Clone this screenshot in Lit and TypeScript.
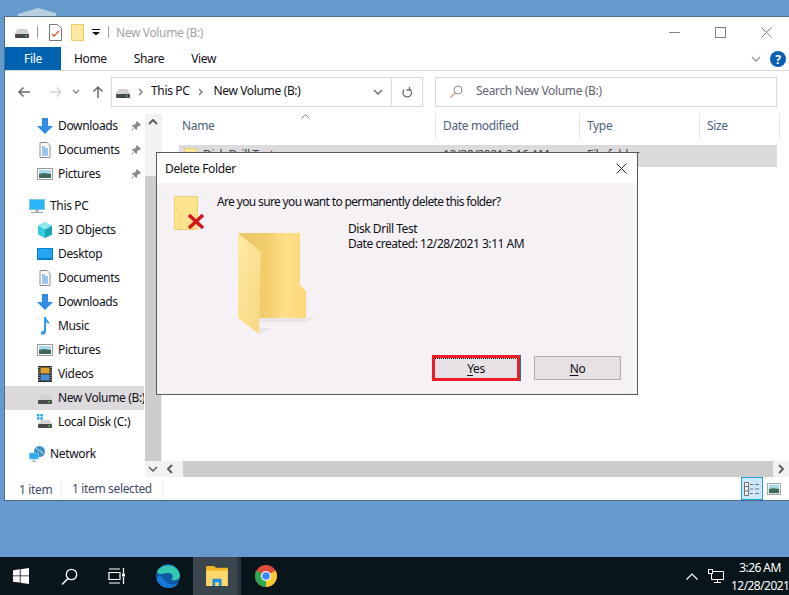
import { css, html, LitElement } from 'lit';
import { customElement } from 'lit/decorators.js';

const drive = () => html`<svg width="16" height="16" viewBox="0 0 16 16"><path d="M3.500 5h9l2.500 4v1H1V9z" fill="#d2d2d2"/><rect x="1" y="10" width="14" height="4" rx="1" fill="#4a4a4a"/><rect x="11" y="11.500" width="2" height="1" fill="#5fe05f"/></svg>`;
const docIcon = () => html`<svg width="16" height="16" viewBox="0 0 16 16"><path d="M3 .5h7l3 3v12H3z" fill="#fff" stroke="#8d8d8d"/><path d="M5 5h3M5 7h6M5 9h6M5 11h6M5 13h6" stroke="#2f8fe0"/></svg>`;
const downIcon = () => html`<svg width="16" height="16" viewBox="0 0 16 16"><path d="M5 0h6v8h5l-8 8-8-8h5z" fill="#2f8fe6"/></svg>`;
const picIcon = () => html`<svg width="16" height="16" viewBox="0 0 16 16"><rect x="0.5" y="2.500" width="15" height="11" fill="#fff" stroke="#9a9a9a"/><rect x="2" y="4" width="12" height="4" fill="#a9d6ea"/><path d="M2 8l5-1 7 1v4H2z" fill="#3e6a5e"/></svg>`;
const pin = () => html`<svg class="pin" width="10" height="10" viewBox="0 0 10 10"><path d="M6 0l4 4-1 1-1-.3-2 2 .2 1.600-1 .7L3.400 7 1 9.500.5 9 3 6.600.9 4.800 1.600 3.800l1.600.2 2-2L5 1z" fill="#8b8b8b"/></svg>`;
const pcIcon = () => html`<svg width="16" height="16" viewBox="0 0 16 16"><rect x="0.5" y="1.500" width="15" height="10" fill="#29b6f6" stroke="#7cc7e8"/><path d="M6 12h4v1.500H6zM2 14h12v1H2z" fill="#9aa4ab"/></svg>`;
const cubeIcon = () => html`<svg width="16" height="16" viewBox="0 0 16 16"><path d="M8 0l7 3.500v9L8 16l-7-3.500v-9z" fill="#35cbdc"/><path d="M8 7.500V16l7-3.500v-9z" fill="#1aa4b8"/><path d="M1 3.500L8 0l7 3.500-7 4z" fill="#8fe8f0"/></svg>`;
const deskIcon = () => html`<svg width="16" height="16" viewBox="0 0 16 16"><rect x="0" y="2" width="16" height="12" fill="#0b7fd6"/><rect x="1" y="3" width="14" height="9" fill="#25a7f0"/></svg>`;
const noteIcon = () => html`<svg width="16" height="18" viewBox="0 0 16 18"><path d="M7 0h2c.3 2.500 2 3.500 3.500 6-1 2-2-.5-3.500-1v9.500C9 17 6.500 18.300 4.500 17.500 3 16.500 4 14 7 13.500z" fill="#2f9cf0"/></svg>`;
const videoIcon = () => html`<svg width="16" height="16" viewBox="0 0 16 16"><rect x="1" y="0" width="14" height="16" fill="#2b2b2b"/><rect x="3.500" y="1.500" width="9" height="6" fill="#e0a030"/><rect x="3.500" y="8.500" width="9" height="6" fill="#4a90d0"/><path d="M2 1v14M14 1v14" stroke="#fff" stroke-dasharray="1 1.500"/></svg>`;
const localIcon = () => html`<svg width="16" height="16" viewBox="0 0 16 16"><path d="M0 0h2.500v2.500H0zM3.300 0h2.500v2.500H3.300zM0 3.300h2.500v2.500H0zM3.300 3.300h2.500v2.500H3.300z" fill="#25a7f0"/><path d="M4 6h8.500l2.500 3.500v.5H1v-.5z" fill="#d2d2d2"/><rect x="1" y="10" width="14" height="4" rx="1" fill="#4a4a4a"/><rect x="11" y="11.500" width="2" height="1" fill="#5fe05f"/></svg>`;
const netIcon = () => html`<svg width="16" height="16" viewBox="0 0 16 16"><circle cx="10.500" cy="5.500" r="5.500" fill="#3f8fc4"/><path d="M7 2c2 1 2 3 5 3l2 3" stroke="#bfe3f5" fill="none"/><rect x="0.500" y="7" width="9" height="6" fill="#2da8ee" stroke="#90c8e8" stroke-width="0.700"/><path d="M3.500 13.500h3v1h-3zM2.500 15h5v.7h-5z" fill="#9aa4ab"/></svg>`;
const folderSmall = () => html`<svg width="13" height="17" viewBox="0 0 13 17"><path d="M.5.500h12v16H.5z" fill="#ffe9a0" stroke="#eccb6a"/></svg>`;
const chevR = () => html`<svg width="6" height="8" viewBox="0 0 6 8"><path d="M1 1l3 3-3 3" fill="none" stroke="#808080" stroke-width="1.500"/></svg>`;
const chevD = (c = '#707070') => html`<svg width="10" height="6" viewBox="0 0 10 6"><path d="M1 1l4 4 4-4" fill="none" stroke="${c}" stroke-width="1.500"/></svg>`;

const NAV_TOP = [
  { icon: downIcon, label: 'Downloads' },
  { icon: docIcon, label: 'Documents' },
  { icon: picIcon, label: 'Pictures' },
];
const NAV_PC = [
  { icon: cubeIcon, label: '3D Objects' },
  { icon: deskIcon, label: 'Desktop' },
  { icon: docIcon, label: 'Documents' },
  { icon: downIcon, label: 'Downloads' },
  { icon: noteIcon, label: 'Music' },
  { icon: picIcon, label: 'Pictures' },
  { icon: videoIcon, label: 'Videos' },
  { icon: drive, label: 'New Volume (B:)', selected: true },
  { icon: localIcon, label: 'Local Disk (C:)' },
];

@customElement('app-root')
export class AppRoot extends LitElement {
  static override styles = css`
    :host {
      display: block;
      width: 789px;
      height: 595px;
      position: relative;
      overflow: hidden;
      background: #6699cc;
      font: 12px 'Noto Sans', sans-serif;
      letter-spacing: -0.35px;
      color: #101018;
    }
    svg { display: block; flex: none; }
    .page { display: flex; flex-direction: column; height: 595px; }
    .desk { flex: 1; padding: 16px 0 0 4px; position: relative; }
    .bin { position: absolute; left: 18px; top: 8px; }
    .window {
      height: 485px;
      box-sizing: border-box;
      background: #fff;
      border: 1px solid #4d6f8f;
      border-right: 0;
      display: flex;
      flex-direction: column;
    }
    .titlebar { height: 30px; display: flex; align-items: center; padding-left: 9px; flex: none; }
    .tsep { width: 1px; height: 12px; background: #9a9a9a; }
    .wtitle { color: #a3a3a3; margin-left: 7px; flex: 1; }
    .wbtns { display: flex; align-items: center; gap: 35px; padding-right: 17px; }
    .tabs { height: 23px; display: flex; align-items: stretch; border-bottom: 1px solid #dadada; flex: none; }
    .tab-file { width: 56px; background: #0063b1; color: #fff; display: flex; align-items: center; justify-content: center; }
    .tab { display: flex; align-items: center; }
    .tab-right { margin-left: auto; display: flex; align-items: center; gap: 9px; padding-right: 3px; background: #fefefe; }
    .qtext { font: 700 12px 'Noto Sans', sans-serif; fill: #fff; letter-spacing: 0; }
    .navbar { height: 42px; flex: none; display: flex; align-items: center; padding-bottom: 1px; box-sizing: border-box; }
    .nav-btns { width: 106px; display: flex; align-items: center; padding-left: 12px; box-sizing: border-box; }
    .addr { width: 312px; height: 30px; box-sizing: border-box; border: 1px solid #d9d9d9; display: flex; align-items: center; }
    .addr-path { width: 280px; flex: none; display: flex; align-items: center; box-sizing: border-box; padding-left: 3px; height: 100%; border-right: 1px solid #d9d9d9; }
    .crumb { padding-bottom: 2px; }
    .refresh { flex: 1; display: flex; justify-content: center; }
    .search { width: 342px; height: 30px; margin-left: 12px; box-sizing: border-box; border: 1px solid #d9d9d9; display: flex; align-items: center; padding-left: 14px; gap: 13px; color: #5f6670; }
    .search span { padding-bottom: 2px; }
    .main { flex: 1; display: flex; min-height: 0; padding-top: 1px; }
    .navpane { width: 139px; margin-right: 1px; flex: none; overflow: hidden; }
    .nrow { height: 24px; display: flex; align-items: center; padding-left: 32px; gap: 5px; white-space: nowrap; position: relative; }
    .nrow span { padding-bottom: 2px; }
    .nrow.lvl0 { padding-left: 24px; }
    .nrow.sel { background: #dcdadd; }
    .nrow .pin { position: absolute; left: 126px; top: 7px; }
    .gap { height: 8px; }
    .vscroll { width: 16px; flex: none; background: #f4f1f5; display: flex; flex-direction: column; }
    .sb-btn { height: 16px; flex: none; display: flex; align-items: center; justify-content: center; }
    .vtrack { flex: 1; display: flex; flex-direction: column; padding-top: 46px; }
    .vthumb { flex: 1; background: #cdcdcd; }
    .pane { flex: 1; display: flex; flex-direction: column; border-left: 1px solid #f0f0f0; min-width: 0; }
    .list { flex: 1; min-height: 0; }
    .lhead { height: 31px; display: flex; color: #4c607a; position: relative; }
    .col { display: flex; align-items: center; padding: 0 0 2px 7px; box-sizing: border-box; height: 25px; border-right: 1px solid #e5e5e5; }
    .sort { position: absolute; left: 139px; top: 0; }
    .lrow { height: 22px; margin: 0 12px 0 17px; background: #dcdadd; display: flex; align-items: center; padding-left: 5px; white-space: nowrap; color: #444; }
    .lrow span { padding-bottom: 3px; }
    .lrow .c-name { width: 240px; margin-left: 6px; }
    .lrow .c-date { width: 144px; }
    .hscroll { height: 16px; flex: none; display: flex; background: #f4f1f5; }
    .hthumb { flex: 1; background: #cdcdcd; margin: 0 0 0 5px; }
    .sb-h { width: 16px; flex: none; display: flex; align-items: center; justify-content: center; }
    .status { height: 23px; flex: none; display: flex; align-items: center; color: #3f4a66; }
    .st1 { width: 57px; padding-left: 14px; box-sizing: border-box; border-right: 1px solid #eee; height: 16px; line-height: 16px; padding-top: 1px; }
    .st2 { padding-left: 10px; width: 90px; border-right: 1px solid #eee; height: 16px; line-height: 16px; padding-top: 1px; }
    .views { margin-left: auto; display: flex; align-items: center; padding-right: 8px; gap: 4px; }
    .vbtn { width: 22px; height: 23px; box-sizing: border-box; background: #cce8ff; border: 1px solid #26a0da; display: flex; align-items: center; justify-content: center; }
    .dialog {
      position: absolute;
      left: 156px;
      top: 152px;
      width: 482px;
      height: 243px;
      box-sizing: border-box;
      border: 1px solid #5a5a5a;
      background: #f5f1f5;
      display: flex;
      flex-direction: column;
    }
    .dtitle { height: 30px; flex: none; background: #fff; display: flex; align-items: center; justify-content: space-between; padding: 0 10px 0 8px; }
    .dbody { flex: 1; display: grid; grid-template-columns: 43px 131px 1fr; grid-template-rows: auto 1fr auto; padding: 11px 16px 13px 17px; }
    .dsmall { grid-row: 1 / 3; position: relative; width: 30px; height: 36px; margin-top: 2px; }
    .dsmall .x { position: absolute; left: 13px; top: 17px; }
    .q { grid-column: 2 / 4; line-height: 16px; letter-spacing: -0.645px; }
    .dfolder { grid-column: 2; grid-row: 2; margin: 23px 0 0 21px; }
    .dinfo { grid-column: 3; grid-row: 2; padding-top: 11px; line-height: 15px; letter-spacing: -0.46px; }
    .dbtns { grid-column: 1 / 4; grid-row: 3; display: flex; justify-content: flex-end; align-items: center; gap: 14px; }
    .btn { width: 87px; height: 24px; box-sizing: border-box; border: 1px solid #adadad; background: #e5e1e5; display: flex; align-items: center; justify-content: center; }
    .btn u { text-underline-offset: 2px; }
    .btn.focus {
      width: 88px;
      height: 26px;
      border: 3px solid #ed1c24;
      box-shadow: 1px 0 0 #0078d7;
      background: repeating-linear-gradient(90deg, #111 0 1px, transparent 1px 2px) 0 0 / 100% 1px no-repeat #e5e1e5;
    }
    .taskbar { height: 38px; flex: none; background: #08151b; display: flex; align-items: center; color: #fff; }
    .tb { display: flex; align-items: center; justify-content: center; height: 100%; }
    .tb.edge { width: 57px; box-sizing: border-box; padding-left: 7px; }
    .tb.active { background: #3a464d; width: 44px; box-sizing: content-box; border-right: 4px solid #2b363c; padding-left: 0; }
    .tb.active svg { margin-left: 4px; }
    .tray { margin-left: auto; display: flex; align-items: center; height: 100%; }
    .clock { width: 58px; text-align: center; line-height: 18px; margin-left: 7px; white-space: nowrap; padding-top: 2px; letter-spacing: -0.55px; }
  `;

  private renderNavRow(r: { icon: () => unknown; label: string; selected?: boolean }, pinned = false) {
    return html`<div class="nrow ${r.selected ? 'sel' : ''}">${r.icon()}<span>${r.label}</span>${pinned ? pin() : ''}</div>`;
  }

  private renderDialog() {
    return html`
      <div class="dialog">
        <div class="dtitle">
          <span>Delete Folder</span>
          <svg width="11" height="11" viewBox="0 0 11 11"><path d="M.5.500l10 10M10.500.500l-10 10" stroke="#202020" fill="none"/></svg>
        </div>
        <div class="dbody">
          <div class="dsmall">
            <svg width="24" height="34" viewBox="0 0 24 34"><path d="M.5.500h23v33H.5z" fill="#ffe38c" stroke="#efd070"/></svg>
            <svg class="x" width="18" height="17" viewBox="0 0 18 17"><path d="M2 2l14 13M16 2L2 15" stroke="#d8141c" stroke-width="3.500"/></svg>
          </div>
          <div class="q">Are you sure you want to permanently delete this folder?</div>
          <svg class="dfolder" width="78" height="102" viewBox="0 0 78 102">
            <defs>
              <linearGradient id="fg" x1="0" x2="1" y1="0" y2="0"><stop offset="0" stop-color="#e9c465"/><stop offset=".45" stop-color="#f4cf70"/><stop offset=".7" stop-color="#ffe08a"/><stop offset="1" stop-color="#fbd777"/></linearGradient>
              <linearGradient id="ff" x1="0" x2="1" y1="0" y2="1"><stop offset="0" stop-color="#ffeaa6"/><stop offset="1" stop-color="#f7d680"/></linearGradient>
            </defs>
            <path d="M21 85h47l10-1-9 5H21zM21 95h14l-14 6z" fill="#e8e4e8"/>
            <path d="M0 0h62v52l6 6v27H21z" fill="url(#fg)"/>
            <path d="M0 0l23 19-2 82L0 85z" fill="url(#ff)"/>
          </svg>
          <div class="dinfo">Disk Drill Test<br />Date created: 12/28/2021 3:11 AM</div>
          <div class="dbtns">
            <div class="btn focus"><span><u>Y</u>es</span></div>
            <div class="btn"><span><u>N</u>o</span></div>
          </div>
        </div>
      </div>
    `;
  }

  override render() {
    return html`
      <div class="page">
        <div class="desk">
          <svg class="bin" width="38" height="8" viewBox="0 0 38 8"><path d="M0 6l20-6 18 5v3H0z" fill="#b8cfe2"/></svg>
          <div class="window">
            <div class="titlebar">
              ${drive()}
              <div class="tsep" style="margin:0 11px 0 7px"></div>
              <svg width="13" height="17" viewBox="0 0 13 17"><path d="M.5.500h8l4 4v12H.5z" fill="#fff" stroke="#777"/><path d="M3 10l2 2 5-5" stroke="#e8562a" stroke-width="1.300" fill="none"/></svg>
              <div style="width:9px"></div>
              <svg width="14" height="17" viewBox="0 0 14 17"><path d="M.5.500h12v16H.5z" fill="#ffe9a0" stroke="#eccb6a"/></svg>
              <div style="width:7px"></div>
              <svg width="8" height="6" viewBox="0 0 8 6"><path d="M0 0h8v1H0zM0 3h8L4 6.500z" fill="#111"/></svg>
              <div class="tsep" style="margin-left:8px"></div>
              <span class="wtitle">New Volume (B:)</span>
              <div class="wbtns">
                <svg width="11" height="11" viewBox="0 0 11 11"><path d="M0 5.500h11" stroke="#808080"/></svg>
                <svg width="11" height="11" viewBox="0 0 11 11"><rect x=".5" y=".5" width="10" height="10" fill="none" stroke="#808080"/></svg>
                <svg width="11" height="11" viewBox="0 0 11 11"><path d="M.5.500l10 10M10.500.500l-10 10" stroke="#808080"/></svg>
              </div>
            </div>
            <div class="tabs">
              <div class="tab-file">File</div>
              <div class="tab" style="margin-left:13px">Home</div>
              <div class="tab" style="margin-left:27px">Share</div>
              <div class="tab" style="margin-left:27px">View</div>
              <div class="tab-right">
                ${chevD('#a0a0a0')}
                <svg width="16" height="16" viewBox="0 0 16 16"><circle cx="8" cy="8" r="8" fill="#0a5fb4"/><text class="qtext" x="8" y="12.500" text-anchor="middle">?</text></svg>
              </div>
            </div>
            <div class="navbar">
              <div class="nav-btns">
                <svg width="14" height="12" viewBox="0 0 14 12"><path d="M13 6H2M6.500 1.500L2 6l4.500 4.500" fill="none" stroke="#6b6b6b" stroke-width="1.500"/></svg>
                <div style="width:18px"></div>
                <svg width="14" height="12" viewBox="0 0 14 12"><path d="M1 6h11M7.500 1.500L12 6l-4.500 4.500" fill="none" stroke="#d6d6d6" stroke-width="1.500"/></svg>
                <div style="width:9px"></div>
                <svg width="8" height="5" viewBox="0 0 8 5"><path d="M1 1l3 3 3-3" fill="none" stroke="#8a8a8a" stroke-width="1.300"/></svg>
                <div style="width:12px"></div>
                <svg width="12" height="13" viewBox="0 0 12 13"><path d="M6 13V2M1.500 6.500L6 2l4.500 4.500" fill="none" stroke="#6b6b6b" stroke-width="1.500"/></svg>
              </div>
              <div class="addr">
                <div class="addr-path">
                  ${drive()}
                  <div style="width:7px"></div>${chevR()}<div style="width:7px"></div>
                  <span class="crumb">This PC</span>
                  <div style="width:9px"></div>${chevR()}<div style="width:9px"></div>
                  <span class="crumb">New Volume (B:)</span>
                  <div style="margin-left:auto;padding-right:8px">${chevD()}</div>
                </div>
                <div class="refresh">
                  <svg width="12" height="12" viewBox="0 0 12 12"><path d="M8.500 2.500A4.300 4.300 0 1 1 3 3.300M8.500 .500v3h-3" fill="none" stroke="#6f6f6f" stroke-width="1.300" transform="translate(0 .5)"/></svg>
                </div>
              </div>
              <div class="search">
                <svg width="13" height="13" viewBox="0 0 13 13"><circle cx="8" cy="5" r="4" fill="none" stroke="#8a8a8a"/><path d="M5 8l-4.500 4.500" stroke="#c49a80" stroke-width="1.200"/></svg>
                <span>Search New Volume (B:)</span>
              </div>
            </div>
            <div class="main">
              <div class="navpane">
                ${NAV_TOP.map((r) => this.renderNavRow(r, true))}
                <div class="gap"></div>
                <div class="nrow lvl0">${pcIcon()}<span>This PC</span></div>
                ${NAV_PC.map((r) => this.renderNavRow(r))}
                <div class="gap"></div>
                <div class="nrow lvl0">${netIcon()}<span>Network</span></div>
              </div>
              <div class="vscroll">
                <div class="sb-btn"><svg width="10" height="6" viewBox="0 0 10 6"><path d="M1 5l4-4 4 4" fill="none" stroke="#606060" stroke-width="2"/></svg></div>
                <div class="vtrack"><div class="vthumb"></div></div>
                <div class="sb-btn">${chevD('#606060')}</div>
              </div>
              <div class="pane">
                <div class="list">
                  <div class="lhead">
                    <div class="col" style="width:274px;padding-left:20px">Name</div>
                    <div class="col" style="width:144px">Date modified</div>
                    <div class="col" style="width:120px">Type</div>
                    <div class="col" style="width:80px">Size</div>
                    <svg class="sort" width="9" height="5" viewBox="0 0 9 5"><path d="M.5 4.500l4-4 4 4" fill="none" stroke="#808080"/></svg>
                  </div>
                  <div class="lrow">
                    ${folderSmall()}
                    <span class="c-name">Disk Drill Test</span>
                    <span class="c-date">12/28/2021 3:16 AM</span>
                    <span>File folder</span>
                  </div>
                </div>
                <div class="hscroll">
                  <div class="sb-h"><svg width="6" height="10" viewBox="0 0 6 10"><path d="M5 1L1 5l4 4" fill="none" stroke="#606060" stroke-width="2"/></svg></div>
                  <div class="hthumb"></div>
                  <div class="sb-h"><svg width="6" height="10" viewBox="0 0 6 10"><path d="M1 1l4 4-4 4" fill="none" stroke="#606060" stroke-width="2"/></svg></div>
                </div>
              </div>
            </div>
            <div class="status">
              <div class="st1">1 item</div>
              <div class="st2">1 item selected</div>
              <div class="views">
                <div class="vbtn"><svg width="16" height="14" viewBox="0 0 16 14"><path d="M.5.500h4v13h-4zM.5 4.500h4M.5 9h4" fill="#eee" stroke="#707070"/><path d="M6 2.500h3M11 2.500h4M6 7h3M11 7h4M6 11.500h3M11 11.500h4" stroke="#707070"/></svg></div>
                <svg width="14" height="12" viewBox="0 0 16 14"><rect x="0.500" y="0.500" width="15" height="13" fill="#fff" stroke="#9a9a9a"/><rect x="2" y="2" width="12" height="5" fill="#a9d6ea"/><path d="M2 7l5-1 7 1v5H2z" fill="#3e6a5e"/></svg>
              </div>
            </div>
          </div>
        </div>
        <div class="taskbar">
          <div class="tb" style="width:42px"><svg width="16" height="16" viewBox="0 0 16 16"><path d="M0 2.300l6.800-1v6.200H0zM7.600 1.200L16 0v7.500H7.600zM0 8.300h6.800v6.300L0 13.700zM7.600 8.300H16V16l-8.400-1.200z" fill="#fff"/></svg></div>
          <div class="tb" style="width:55px"><svg width="17" height="17" viewBox="0 0 17 17"><circle cx="10.500" cy="6.500" r="5.200" fill="none" stroke="#fff" stroke-width="1.300"/><path d="M7 10.500L1 16.500" stroke="#fff" stroke-width="1.500"/></svg></div>
          <div class="tb" style="width:39px"><svg width="17" height="16" viewBox="0 0 17 16"><path d="M1 4.500h11v7H1zM1 1h11M1 15h11M15.500 0v5M15.500 9v7" fill="none" stroke="#fff" stroke-width="1.200"/><rect x="14" y="5.500" width="3" height="3" fill="#fff"/></svg></div>
          <div class="tb edge"><svg width="24" height="24" viewBox="0 0 24 24"><circle cx="12" cy="12" r="12" fill="#0c59a4"/><path d="M1 8C4 0 20-3 24 11c0 5-6 7-9 4 3-1 2-6-3-6-5 0-8 3-11-1z" fill="#34c8b0"/><path d="M1 14c-1 4 5 10 12 10 4 0 8-2 9-5-4 2-9 2-12-1-3-3-5-9-9-4z" fill="#1479d4"/></svg></div>
          <div class="tb active"><svg width="22" height="20" viewBox="0 0 24 22"><path d="M0 0h9l2 2h13v4H0z" fill="#f0b429"/><rect y="5" width="24" height="17" fill="#ffd76a"/><path d="M7 22v-8h10v8h-3v-4h-4v4z" fill="#1b8fe0"/></svg></div>
          <div class="tb" style="width:50px"><svg width="22" height="22" viewBox="0 0 22 22"><circle cx="11" cy="11" r="11" fill="#dd4b39"/><path d="M11 11L1.500 5.500A11 11 0 0 0 11 22z" fill="#2da94f"/><path d="M11 11l9.500-5.500A11 11 0 0 1 11 22z" fill="#fcc934"/><circle cx="11" cy="11" r="5" fill="#fff"/><circle cx="11" cy="11" r="3.800" fill="#4285f4"/></svg></div>
          <div class="tray">
            <svg width="12" height="7" viewBox="0 0 12 7"><path d="M.5 6.500L6 1l5.500 5.500" fill="none" stroke="#fff" stroke-width="1.200"/></svg>
            <div style="width:10px"></div>
            <svg width="16" height="14" viewBox="0 0 16 14"><path d="M3.500 2.500h12v8h-12zM9.500 10.500v3M6 13.500h7" fill="none" stroke="#fff"/><rect x=".5" y=".5" width="4" height="4" fill="#08151b" stroke="#fff"/></svg>
            <div class="clock">3:26 AM<br />12/28/2021</div>
          </div>
        </div>
        ${this.renderDialog()}
      </div>
    `;
  }
}

declare global {
  interface HTMLElementTagNameMap {
    'app-root': AppRoot;
  }
}
